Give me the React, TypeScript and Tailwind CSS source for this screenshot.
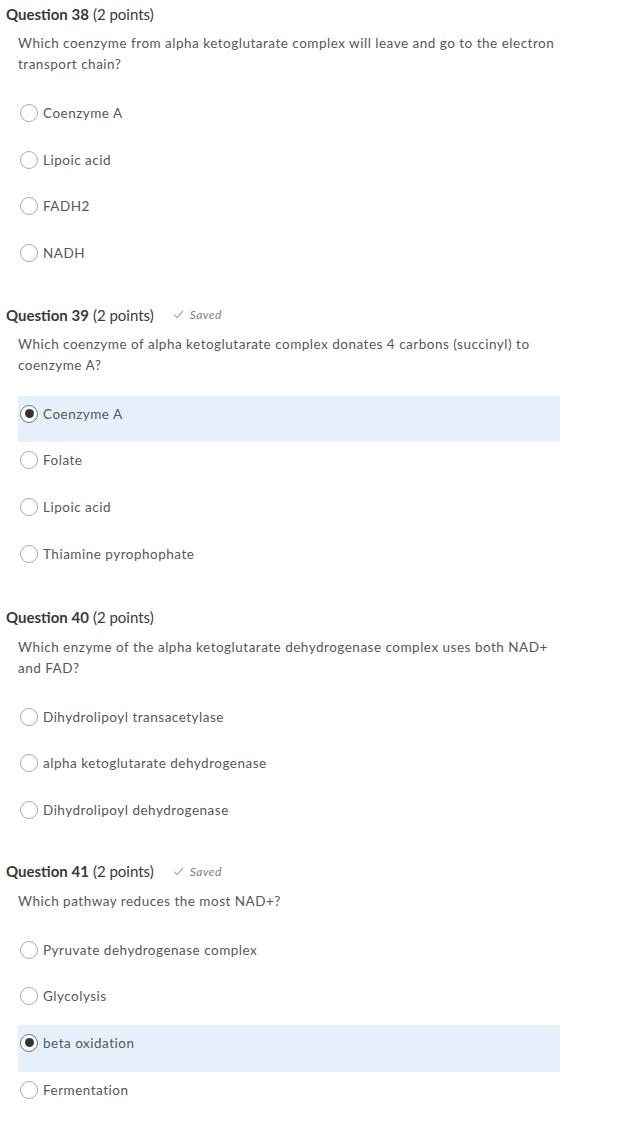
import React from 'react';

interface Question {
  number: number;
  text: string[];
  options: string[];
  selected?: number;
  saved?: boolean;
  gapAfter?: string;
}

const questions: Question[] = [
  {
    number: 38,
    text: [
      'Which coenzyme from alpha ketoglutarate complex will leave and go to the electron',
      'transport chain?',
    ],
    options: ['Coenzyme A', 'Lipoic acid', 'FADH2', 'NADH'],
  },
  {
    number: 39,
    text: [
      'Which coenzyme of alpha ketoglutarate complex donates 4 carbons (succinyl) to',
      'coenzyme A?',
    ],
    options: ['Coenzyme A', 'Folate', 'Lipoic acid', 'Thiamine pyrophophate'],
    selected: 0,
    saved: true,
    gapAfter: 'mb-[25px]',
  },
  {
    number: 40,
    text: [
      'Which enzyme of the alpha ketoglutarate dehydrogenase complex uses both NAD+',
      'and FAD?',
    ],
    options: [
      'Dihydrolipoyl transacetylase',
      'alpha ketoglutarate dehydrogenase',
      'Dihydrolipoyl dehydrogenase',
    ],
  },
  {
    number: 41,
    text: ['Which pathway reduces the most NAD+?'],
    options: ['Pyruvate dehydrogenase complex', 'Glycolysis', 'beta oxidation', 'Fermentation'],
    selected: 2,
    saved: true,
  },
];

function Radio({ checked }: { checked: boolean }) {
  return (
    <span
      className={`flex h-[18px] w-[18px] shrink-0 items-center justify-center rounded-full border bg-white ${
        checked ? 'border-[#6e7376]' : 'border-[#a6aaad]'
      }`}
    >
      {checked && <span className="h-[9px] w-[9px] rounded-full bg-[#333]" />}
    </span>
  );
}

function QuestionBlock({ q }: { q: Question }) {
  return (
    <div className={q.gapAfter ?? 'mb-[23px]'}>
      <div className="flex h-[20px] items-center pl-[6px] text-[15px] text-[#3a3a3a]">
        <span className="font-bold">Question {q.number}</span>
        <span className="ml-[4px]">(2 points)</span>
        {q.saved && (
          <span className="ml-[19px] flex items-center gap-[6px] text-[12px] italic tracking-[0.4px] text-[#7c8083]">
            <svg width="11" height="9" viewBox="0 0 11 9" fill="none">
              <path d="M1 4.6 L4 7.6 L10 1" stroke="#a6aaad" strokeWidth="1.2" />
            </svg>
            Saved
          </span>
        )}
      </div>
      <div className="mt-[9px] pl-[18px] text-[13.5px] leading-[21px] tracking-[0.5px] text-[#54585a]">
        {q.text.map((line) => (
          <div key={line}>{line}</div>
        ))}
      </div>
      <div className="mt-[20px] ml-[18px] w-[542px]">
        {q.options.map((opt, i) => (
          <div
            key={opt}
            className={`flex h-[46.7px] items-start pt-[9px] pl-[2px] ${
              q.selected === i ? 'bg-[#e6f0fb]' : ''
            }`}
          >
            <Radio checked={q.selected === i} />
            <span className="ml-[5px] text-[13.5px] leading-[18px] tracking-[0.5px] text-[#54585a]">
              {opt}
            </span>
          </div>
        ))}
      </div>
    </div>
  );
}

export default function App() {
  return (
    <div className="min-h-[1126px] bg-white pt-[4px]" style={{ fontFamily: 'Lato, "Open Sans", sans-serif' }}>
      {questions.map((q) => (
        <QuestionBlock key={q.number} q={q} />
      ))}
    </div>
  );
}
